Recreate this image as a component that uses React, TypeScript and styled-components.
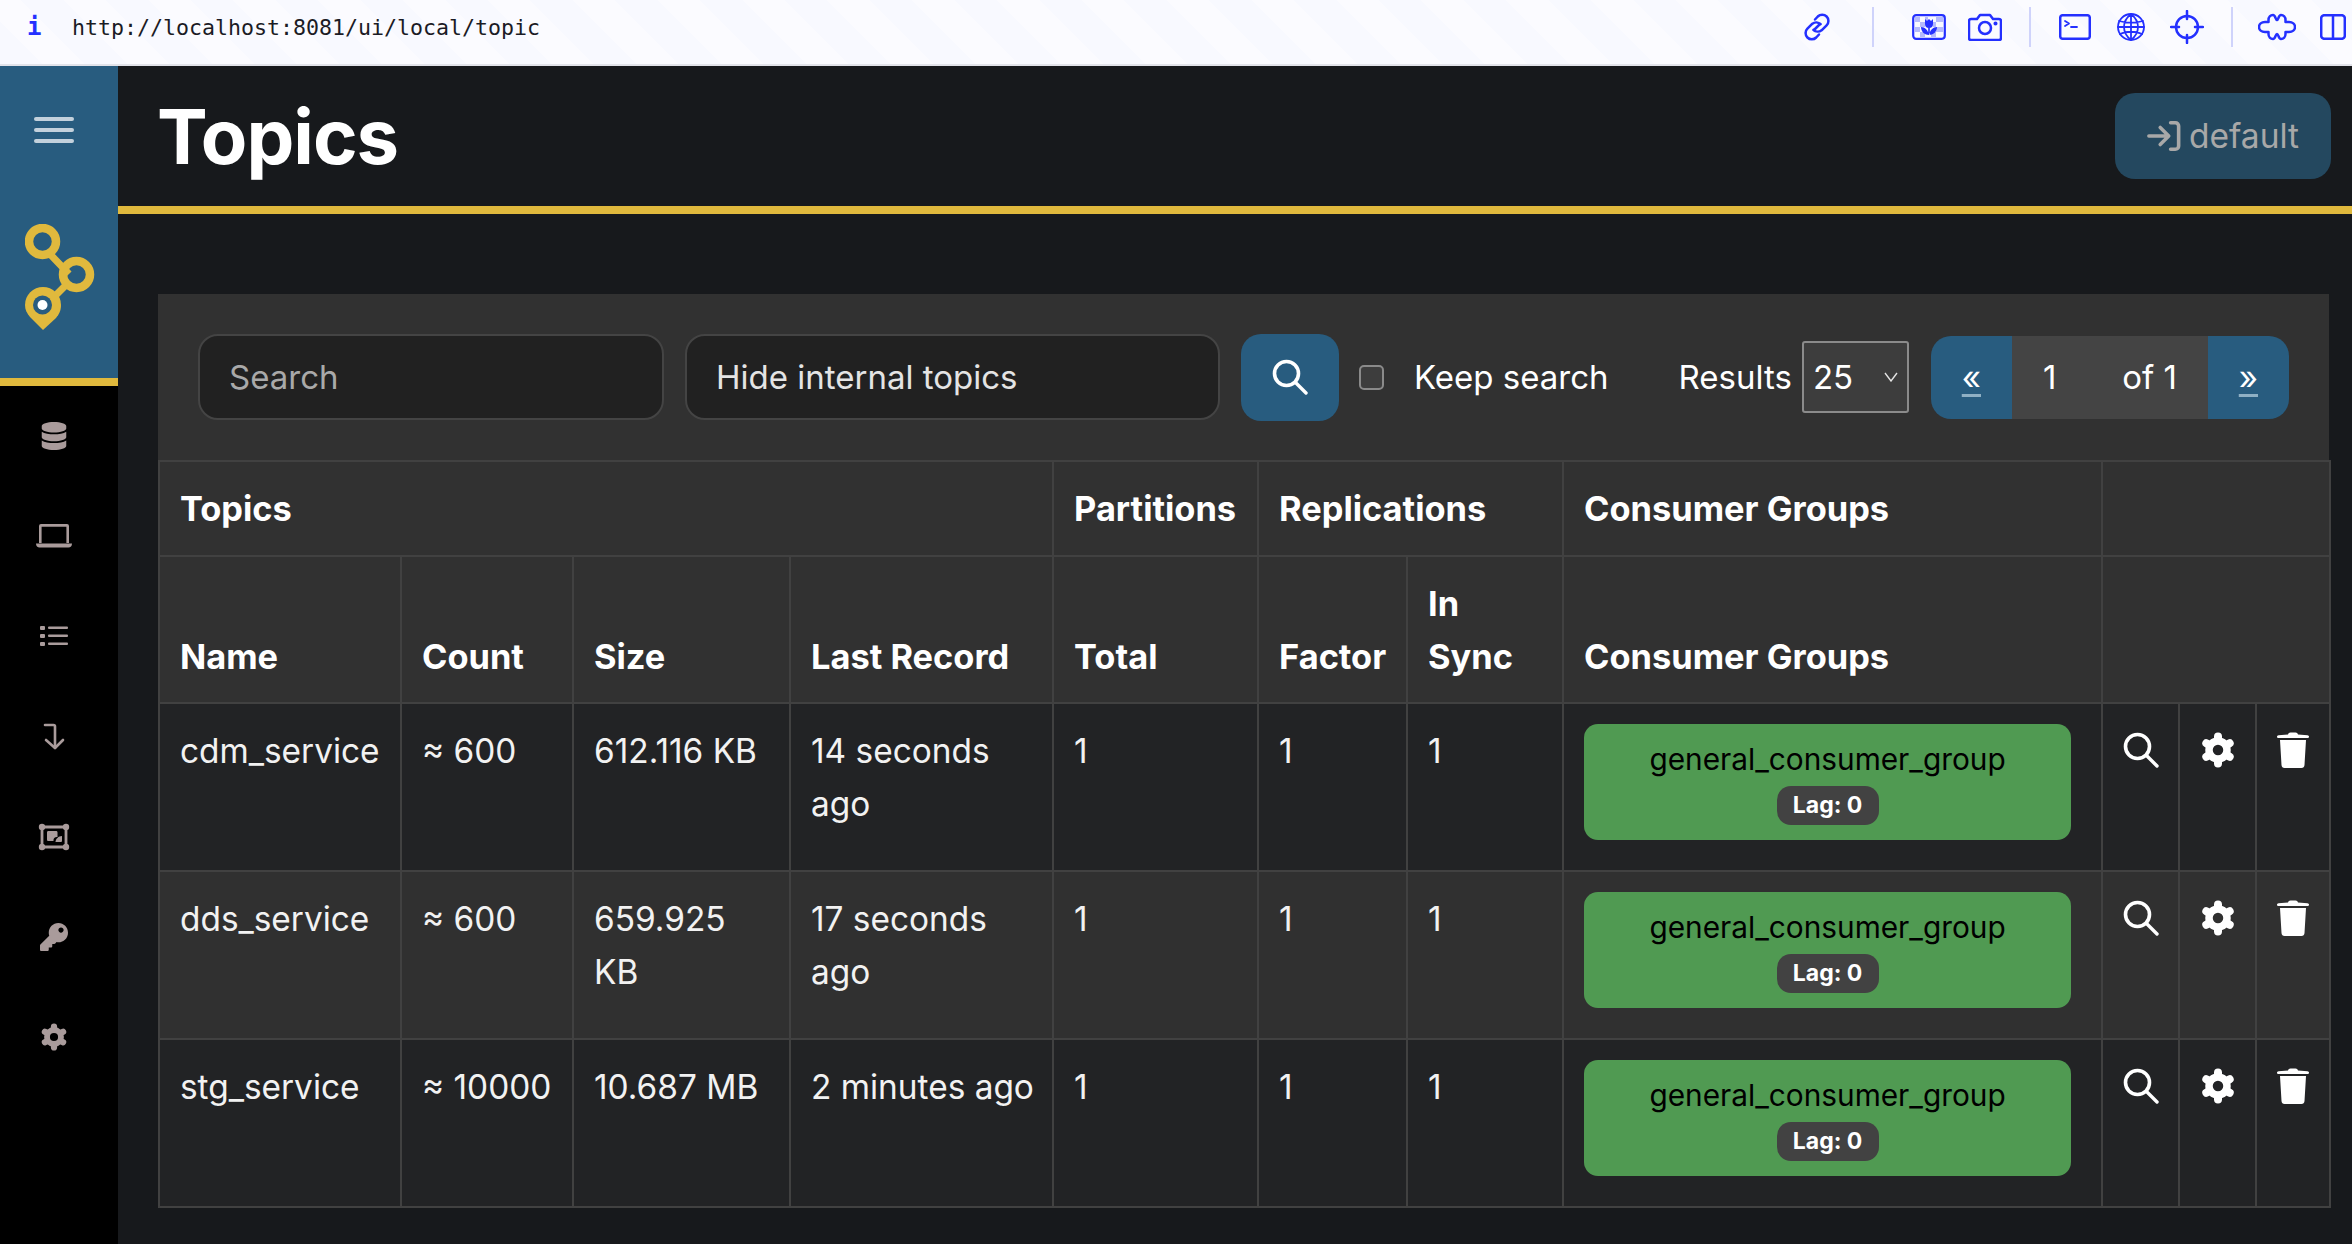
import React from "react";
import styled, { createGlobalStyle } from "styled-components";
import { FaDatabase, FaKey } from "react-icons/fa";

const Global = createGlobalStyle`
  html, body { margin: 0; padding: 0; background: #17191c; }
  body { font-family: Inter, "Liberation Sans", sans-serif; color: #fff; overflow: hidden; }
  * { box-sizing: border-box; }
`;

const Page = styled.div`
  width: 2352px;
  height: 1244px;
  display: flex;
  flex-direction: column;
  overflow: hidden;
`;

const TopBar = styled.header`
  height: 66px;
  flex: none;
  display: flex;
  align-items: center;
  padding-bottom: 10px;
  border-bottom: 2px solid #e2e3ea;
  background: repeating-linear-gradient(45deg, #f8f9ff 0 30px, #fbfbff 30px 60px);
`;

const InfoMark = styled.span`
  width: 72px;
  padding-left: 27px;
  font: 700 24px "DejaVu Sans Mono", monospace;
  color: #2430ff;
`;

const Url = styled.span`
  font: 21.6px "DejaVu Sans Mono", monospace;
  color: #1b1b25;
  flex: 1;
`;

const ToolStrip = styled.div`
  display: flex;
  align-items: center;
  gap: 18px;
`;

const ToolSlot = styled.span`
  width: 38px;
  height: 40px;
  display: flex;
  align-items: center;
  justify-content: center;
  color: #2430ff;
  svg { display: block; flex: none; }
`;

const ToolRule = styled.span<{ $w: number }>`
  width: ${(p) => p.$w}px;
  height: 40px;
  display: flex;
  justify-content: center;
  &::before { content: ""; width: 2px; background: #cfd3fb; }
`;

const Body = styled.div`
  flex: 1;
  display: flex;
  min-height: 0;
`;

const Sidebar = styled.aside`
  width: 118px;
  flex: none;
  background: #000;
  display: flex;
  flex-direction: column;
`;

const Brand = styled.div`
  height: 320px;
  flex: none;
  background: #285c7f;
  border-bottom: 8px solid #e0b93d;
  padding: 51px 0 0 25px;
`;

const Burger = styled.button`
  width: 40px;
  height: 26px;
  padding: 0;
  border: 0;
  background: none;
  display: flex;
  flex-direction: column;
  justify-content: space-between;
  margin: 0 0 81px 9px;
  span { height: 4px; border-radius: 2px; background: #c3d1dc; }
`;

const NavList = styled.nav`
  display: flex;
  flex-direction: column;
`;

const NavItem = styled.a`
  height: 100.2px;
  display: flex;
  align-items: center;
  justify-content: center;
  padding-right: 10px;
  color: #a99b9b;
`;

const Main = styled.main`
  flex: 1;
  min-width: 0;
  display: flex;
  flex-direction: column;
`;

const PageHead = styled.div`
  height: 148px;
  flex: none;
  display: flex;
  align-items: center;
  justify-content: space-between;
  border-bottom: 8px solid #e0b93d;
  padding: 0 21px 0 39px;
`;

const Title = styled.h1`
  margin: 0;
  font-size: 76px;
  font-weight: 700;
  letter-spacing: -1px;
  line-height: 1;
  color: #fff;
`;

const ClusterButton = styled.button`
  width: 216px;
  height: 86px;
  border: 0;
  border-radius: 20px;
  background: #24485f;
  color: #a8a8a8;
  font: 400 33.5px Inter, sans-serif;
  display: flex;
  align-items: center;
  justify-content: center;
  gap: 8px;
`;

const Panel = styled.section`
  width: 2171px;
  margin: 80px 0 0 40px;
  background: #313131;
`;

const Toolbar = styled.form`
  height: 166px;
  display: flex;
  align-items: center;
  padding-left: 40px;
`;

const Field = styled.div<{ $w: number; $muted?: boolean }>`
  width: ${(p) => p.$w}px;
  height: 86px;
  margin-right: 21px;
  padding: 0 29px;
  display: flex;
  align-items: center;
  font-size: 33px;
  background: #212121;
  border: 2px solid #444;
  border-radius: 20px;
  color: ${(p) => (p.$muted ? "#a9a9a9" : "#e4e4e4")};
`;

const SearchButton = styled.button`
  width: 98px;
  height: 87px;
  border: 0;
  border-radius: 20px;
  background: #285c7f;
  color: #fff;
  display: flex;
  align-items: center;
  justify-content: center;
  margin-right: 20px;
`;

const CheckBox = styled.span`
  width: 25px;
  height: 25px;
  border: 2px solid #8a8a8a;
  border-radius: 5px;
  background: #3d3d3d;
  margin-right: 30px;
`;

const ToolbarLabel = styled.span<{ $gap: number }>`
  font-size: 33px;
  color: #fff;
  margin-right: ${(p) => p.$gap}px;
`;

const SelectBox = styled.div`
  width: 107px;
  height: 72px;
  border: 2px solid #8b8b8b;
  border-radius: 3px;
  background: #3d3d3d;
  display: flex;
  align-items: center;
  justify-content: space-between;
  padding: 0 9px;
  font-size: 33px;
  margin-right: 22px;
`;

const Pager = styled.div`
  width: 358px;
  height: 83px;
  display: flex;
  border-radius: 20px;
  overflow: hidden;
  font-size: 33px;
`;

const PagerEnd = styled.a<{ $w: number }>`
  width: ${(p) => p.$w}px;
  background: #285c7f;
  display: flex;
  align-items: center;
  justify-content: center;
  color: #fff;
  text-decoration: underline;
  text-decoration-color: #8fb0c4;
  text-decoration-thickness: 3px;
  text-underline-offset: 5px;
`;

const PagerMiddle = styled.div`
  flex: 1;
  background: #444;
  display: flex;
  align-items: center;
  padding: 0 31px 0 31px;
  justify-content: space-between;
`;

const Table = styled.table`
  width: 2171px;
  table-layout: fixed;
  border-collapse: collapse;
  font-size: 33.4px;
  line-height: 52.5px;
`;

const HeadCell = styled.th`
  padding: 21.25px 20px 19px;
  text-align: left;
  vertical-align: bottom;
  font-size: 34.4px;
  font-weight: 700;
  background: #313131;
  border: 2px solid #414141;
  color: #fff;
`;

const Row = styled.tr<{ $alt: boolean }>`
  background: ${(p) => (p.$alt ? "#303030" : "#222325")};
`;

const Cell = styled.td`
  padding: 21px 20px 20px;
  vertical-align: top;
  border: 2px solid #414141;
  color: #f2f2f2;
`;

const LastRecordCell = styled(Cell)`
  padding-right: 6px;
`;

const GroupCell = styled(Cell)`
  padding: 20px 30px 21px 20px;
`;

const ActionCell = styled(Cell)`
  padding: 28px 0 0;
  text-align: center;
  color: #fff;
  svg { display: block; margin: 0 auto; }
`;

const GroupChip = styled.a`
  display: block;
  height: 116px;
  margin-bottom: 9px;
  border-radius: 14px;
  background: #509a52;
  color: #000;
  text-align: center;
  font-size: 29.8px;
  line-height: 46px;
  padding-top: 12px;
`;

const LagBadge = styled.span`
  display: block;
  width: 102px;
  height: 39px;
  margin: 4px auto 0;
  border-radius: 14px;
  background: #424242;
  color: #fff;
  font-size: 23px;
  font-weight: 700;
  line-height: 39px;
`;

const columns = [242, 172, 217, 263, 205, 149, 156, 539, 77, 77, 74];

const topics = [
  { name: "cdm_service", count: "≈ 600", size: "612.116 KB", last: "14 seconds ago" },
  { name: "dds_service", count: "≈ 600", size: "659.925 KB", last: "17 seconds ago" },
  { name: "stg_service", count: "≈ 10000", size: "10.687 MB", last: "2 minutes ago" },
];

const Lens = ({ size }: { size: number }) => (
  <svg width={size} height={size} viewBox="0 0 36 36" fill="none" stroke="currentColor" strokeWidth="3.6">
    <circle cx="14.500" cy="14.500" r="12" />
    <path d="M23.500 23.500 34 34" strokeWidth="3.400" strokeLinecap="round" />
  </svg>
);

const Gear = ({ size }: { size: number }) => (
  <svg width={size} height={size} viewBox="0 0 36 36" fill="none" stroke="currentColor">
    <circle cx="18" cy="18" r="9" strokeWidth="7.500" />
    <path
      d="M18 7V4.500M18 29v2.500M27.500 12.500l2.200-1.250M27.500 23.500l2.200 1.250M8.500 12.500 6.300 11.250M8.500 23.500l-2.200 1.250"
      strokeWidth="8"
      strokeLinecap="round"
    />
  </svg>
);

const Trash = () => (
  <svg width="32" height="36" viewBox="0 0 32 36" fill="currentColor">
    <path d="M11 2.500c.3-1.200 1.200-2 2.500-2h5c1.300 0 2.200.8 2.500 2l9.500.8c.8.1 1.500.6 1.500 1.400s-.7 1.300-1.500 1.300h-29C.700 6 0 5.500 0 4.700s.7-1.300 1.500-1.400z" />
    <path d="M3 8h26l-1.500 25c-.1 1.700-1.300 3-3 3H7.500c-1.700 0-2.900-1.300-3-3z" />
  </svg>
);

const Logo = () => (
  <svg width="70" height="106" viewBox="0 0 70 106">
    <path d="M24 29 44 50 M44 58 26 76" stroke="#e0b93d" strokeWidth="7" fill="none" />
    <circle cx="17.500" cy="17.500" r="13.500" fill="none" stroke="#e0b93d" strokeWidth="8.500" />
    <circle cx="51.500" cy="50.500" r="13.500" fill="none" stroke="#e0b93d" strokeWidth="8.500" />
    <path d="M0 81a18 18 0 0 1 36 0c0 6-2 9-5 13l-13 12-13-13C2 89 0 86 0 81z" fill="#e0b93d" />
    <circle cx="17.500" cy="81" r="9.500" fill="#285c7f" />
    <circle cx="17.500" cy="81" r="5" fill="#fff" />
  </svg>
);

const NavLaptop = () => (
  <svg width="36" height="24" viewBox="0 0 36 24" fill="currentColor">
    <path d="M5 0h26a2 2 0 0 1 2 2v17h-2.600V2.800H5.600V19H3V2a2 2 0 0 1 2-2z" />
    <path d="M0 19.500h36c0 2.500-1.500 4-3.500 4h-29C1.500 23.500 0 22 0 19.500z" />
  </svg>
);

const NavList3 = () => (
  <svg width="28" height="22" viewBox="0 0 28 22" fill="currentColor">
    <rect x="0" y="1" width="5" height="4" rx="1" />
    <rect x="0" y="9" width="5" height="4" rx="1" />
    <rect x="0" y="17" width="5" height="4" rx="1" />
    <rect x="8" y="1.500" width="20" height="2.600" rx="1" />
    <rect x="8" y="9.500" width="20" height="2.600" rx="1" />
    <rect x="8" y="17.500" width="20" height="2.600" rx="1" />
  </svg>
);

const NavStep = () => (
  <svg width="22" height="28" viewBox="0 0 22 28" fill="none" stroke="currentColor" strokeWidth="2.600" strokeLinecap="round" strokeLinejoin="round">
    <path d="M2 2h8.500c1 0 1.500.6 1.500 1.500V25" />
    <path d="M3 17l9 8 8-8" />
  </svg>
);

const NavSchema = () => (
  <svg width="32" height="28" viewBox="0 0 32 28" fill="currentColor">
    <path d="M4 4h24v20H4z" fill="none" stroke="currentColor" strokeWidth="2.800" />
    <circle cx="4" cy="4" r="3.200" />
    <circle cx="28" cy="4" r="3.200" />
    <circle cx="4" cy="24" r="3.200" />
    <circle cx="28" cy="24" r="3.200" />
    <path d="M9 9.500C9 8.500 9.500 8 10.500 8H18c1 0 1.500.5 1.500 1.500V14c-3 0-4 1-4 4h-5c-1 0-1.500-.5-1.500-1.500z" />
    <path d="M24 13v4.500c0 1-.5 1.500-1.500 1.500h-5c0-3 3-6 6.500-6z" />
  </svg>
);

const LoginMark = () => (
  <svg width="34" height="32" viewBox="0 0 36 32" fill="none" stroke="currentColor" strokeWidth="3.800" strokeLinecap="round" strokeLinejoin="round">
    <path d="M2 16h20M14 7l9 9-9 9" />
    <path d="M25 2h5c2 0 3.500 1.500 3.500 3.500v21c0 2-1.500 3.500-3.500 3.500h-5" />
  </svg>
);

const ChevronSmall = () => (
  <svg width="14" height="10" viewBox="0 0 14 10" fill="none" stroke="#e4e4e4" strokeWidth="1.400">
    <path d="M1 1l6 8 6-8" />
  </svg>
);

const stroke = { fill: "none", stroke: "currentColor", strokeWidth: 2.500, strokeLinecap: "round", strokeLinejoin: "round" } as const;

const ToolLink = () => (
  <svg width="30" height="34" viewBox="0 0 30 30" {...stroke}>
    <path d="M12 18 18 12" />
    <path d="M13 7.500l2.800-3a6.200 6.200 0 0 1 8.800 8.800l-5 5a6.200 6.200 0 0 1-8.200-.5" />
    <path d="M17 22.500l-2.800 3a6.200 6.200 0 0 1-8.800-8.800l5-5a6.200 6.200 0 0 1 8.200.5" />
  </svg>
);

const ToolTulip = () => (
  <svg width="34" height="26" viewBox="0 0 34 26">
    <path d="M3 3h5v5H3zM13 3h3v5h-3zM24 3h7v5h-7zM8 8h5v5H8zM24 8h-3v5h3zM3 13h5v5H3zM24 13h7v5h-7zM8 18h5v5H8zM19 18h5v5h-5z" fill="#b5bafc" />
    <rect x="1.200" y="1.200" width="31.600" height="23.600" rx="3" fill="none" stroke="currentColor" strokeWidth="2.200" />
    <path d="M13 5l2 2 2-2 2 2 2-2v5a4 4 0 0 1-8 0zM16.200 12h1.600v9h-1.600zM9 13c4 0 7 3 8 8-4 0-8-3-8-8zM25 13c-4 0-7 3-8 8 4 0 8-3 8-8z" fill="currentColor" />
  </svg>
);

const ToolCamera = () => (
  <svg width="34" height="28" viewBox="0 0 34 28" {...stroke}>
    <path d="M3 6h6l3-4h10l3 4h6a2 2 0 0 1 2 2v17a2 2 0 0 1-2 2H3a2 2 0 0 1-2-2V8a2 2 0 0 1 2-2z" />
    <circle cx="17" cy="15" r="6" />
    <circle cx="27.500" cy="10.500" r=".8" fill="currentColor" />
  </svg>
);

const ToolTerminal = () => (
  <svg width="32" height="26" viewBox="0 0 32 26" {...stroke}>
    <rect x="1.200" y="1.200" width="29.600" height="23.600" rx="2.500" />
    <path d="M6 7l4 2.500L6 12M12 13h6" strokeWidth="1.800" />
  </svg>
);

const ToolGlobe = () => (
  <svg width="30" height="30" viewBox="0 0 30 30" {...stroke} strokeWidth={1.800}>
    <circle cx="15" cy="15" r="13" />
    <path d="M15 2c-5 4-7 8-7 13s2 9 7 13c5-4 7-8 7-13s-2-9-7-13zM15 2v26M3 9c7 2 17 2 24 0M2 15h26M4 22c6-3 16-3 22 0" />
  </svg>
);

const ToolCross = () => (
  <svg width="34" height="34" viewBox="0 0 34 34" {...stroke}>
    <circle cx="17" cy="17" r="11" />
    <path d="M17 1v8M17 25v8M1 17h8M25 17h8" />
  </svg>
);

const ToolPuzzle = () => (
  <svg width="38" height="28" viewBox="0 0 38 28" {...stroke}>
    <path d="M10.500 9V7c0-3 2-5 4.500-5s2.500 5 4 5 1.500-5 4-5 4.500 2 4.500 5v2H31c3.500 0 6 2 6 5s-2.500 5-6 5h-3.500v2c0 3-2 5-4.500 5s-2.500-5-4-5-1.500 5-4 5-4.500-2-4.500-5v-2H7c-3.500 0-6-2-6-5s2.500-5 6-5z" />
  </svg>
);

const ToolColumns = () => (
  <svg width="26" height="26" viewBox="0 0 26 26" {...stroke}>
    <rect x="1.200" y="1.200" width="23.600" height="23.600" rx="3" />
    <path d="M13 1v24" />
  </svg>
);

export default function App() {
  return (
    <Page>
      <Global />
      <TopBar>
        <InfoMark>i</InfoMark>
        <Url>http://localhost:8081/ui/local/topic</Url>
        <ToolStrip>
          <ToolSlot><ToolLink /></ToolSlot>
          <ToolRule $w={38} />
          <ToolSlot><ToolTulip /></ToolSlot>
          <ToolSlot><ToolCamera /></ToolSlot>
          <ToolRule $w={16} />
          <ToolSlot><ToolTerminal /></ToolSlot>
          <ToolSlot><ToolGlobe /></ToolSlot>
          <ToolSlot><ToolCross /></ToolSlot>
          <ToolRule $w={16} />
          <ToolSlot><ToolPuzzle /></ToolSlot>
          <ToolSlot><ToolColumns /></ToolSlot>
        </ToolStrip>
      </TopBar>
      <Body>
        <Sidebar>
          <Brand>
            <Burger aria-label="menu"><span /><span /><span /></Burger>
            <Logo />
          </Brand>
          <NavList>
            <NavItem><FaDatabase size={28} /></NavItem>
            <NavItem><NavLaptop /></NavItem>
            <NavItem><NavList3 /></NavItem>
            <NavItem><NavStep /></NavItem>
            <NavItem><NavSchema /></NavItem>
            <NavItem><FaKey size={28} /></NavItem>
            <NavItem><Gear size={28} /></NavItem>
          </NavList>
        </Sidebar>
        <Main>
          <PageHead>
            <Title>Topics</Title>
            <ClusterButton><LoginMark />default</ClusterButton>
          </PageHead>
          <Panel>
            <Toolbar>
              <Field $w={466} $muted>Search</Field>
              <Field $w={535}>Hide internal topics</Field>
              <SearchButton aria-label="search"><Lens size={36} /></SearchButton>
              <CheckBox />
              <ToolbarLabel $gap={70}>Keep search</ToolbarLabel>
              <ToolbarLabel $gap={10}>Results</ToolbarLabel>
              <SelectBox>25<ChevronSmall /></SelectBox>
              <Pager>
                <PagerEnd $w={81}>«</PagerEnd>
                <PagerMiddle><span>1</span><span>of 1</span></PagerMiddle>
                <PagerEnd $w={81}>»</PagerEnd>
              </Pager>
            </Toolbar>
            <Table>
              <colgroup>
                {columns.map((w, i) => <col key={i} width={w} />)}
              </colgroup>
              <thead>
                <tr>
                  <HeadCell colSpan={4}>Topics</HeadCell>
                  <HeadCell>Partitions</HeadCell>
                  <HeadCell colSpan={2}>Replications</HeadCell>
                  <HeadCell>Consumer Groups</HeadCell>
                  <HeadCell colSpan={3} />
                </tr>
                <tr>
                  <HeadCell>Name</HeadCell>
                  <HeadCell>Count</HeadCell>
                  <HeadCell>Size</HeadCell>
                  <HeadCell>Last Record</HeadCell>
                  <HeadCell>Total</HeadCell>
                  <HeadCell>Factor</HeadCell>
                  <HeadCell>In Sync</HeadCell>
                  <HeadCell>Consumer Groups</HeadCell>
                  <HeadCell colSpan={3} />
                </tr>
              </thead>
              <tbody>
                {topics.map((t, i) => (
                  <Row key={t.name} $alt={i % 2 === 1}>
                    <Cell>{t.name}</Cell>
                    <Cell>{t.count}</Cell>
                    <Cell>{t.size}</Cell>
                    <LastRecordCell>{t.last}</LastRecordCell>
                    <Cell>1</Cell>
                    <Cell>1</Cell>
                    <Cell>1</Cell>
                    <GroupCell>
                      <GroupChip>
                        general_consumer_group
                        <LagBadge>Lag: 0</LagBadge>
                      </GroupChip>
                    </GroupCell>
                    <ActionCell><Lens size={36} /></ActionCell>
                    <ActionCell><Gear size={36} /></ActionCell>
                    <ActionCell><Trash /></ActionCell>
                  </Row>
                ))}
              </tbody>
            </Table>
          </Panel>
        </Main>
      </Body>
    </Page>
  );
}
